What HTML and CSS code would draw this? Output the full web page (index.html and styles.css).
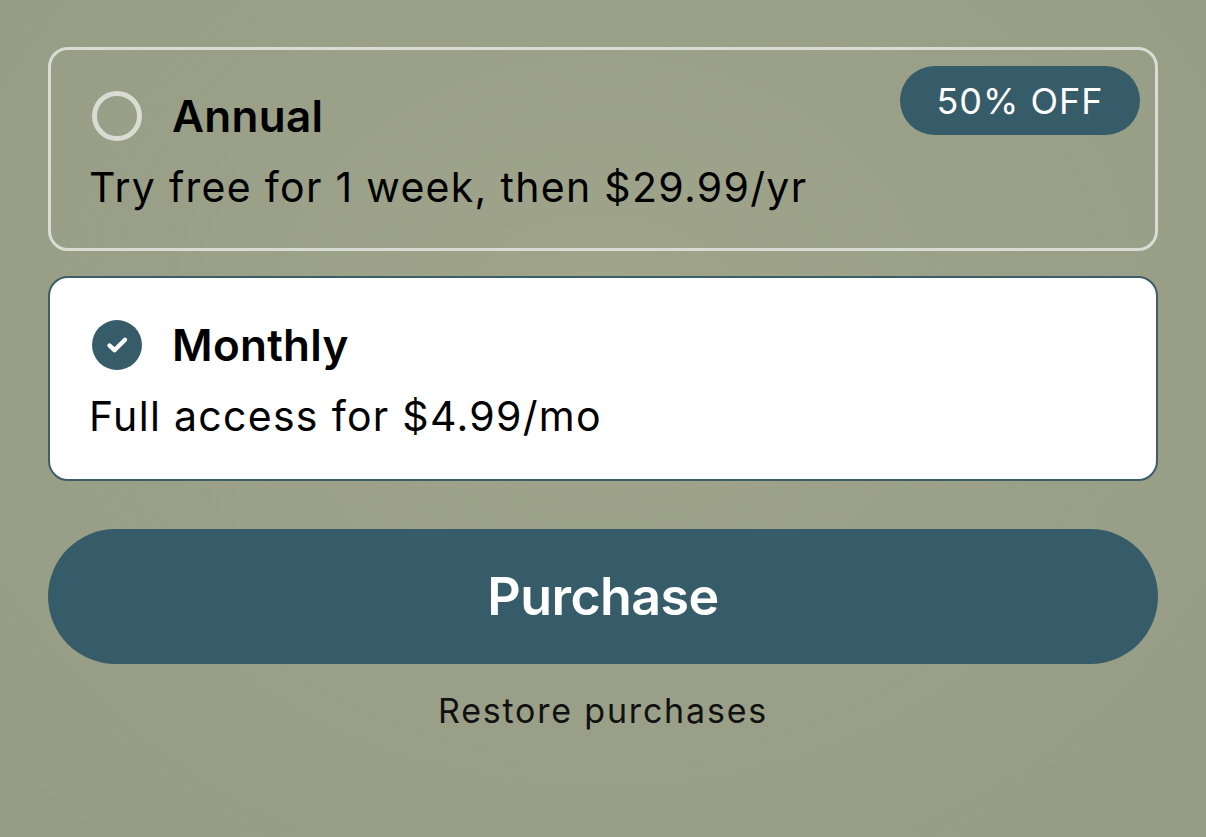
FILE: index.html
```html
<!DOCTYPE html>
<html>
<head>
<meta charset="utf-8">
<link rel="stylesheet" href="styles.css">
</head>
<body>
<main class="paywall">
  <div class="plan plan--idle">
    <div class="plan__head">
      <span class="radio"></span>
      <span class="plan__title">Annual</span>
    </div>
    <div class="plan__desc">Try free for 1 week, then $29.99/yr</div>
    <span class="badge">50% OFF</span>
  </div>
  <div class="plan plan--selected">
    <div class="plan__head">
      <span class="radio radio--checked">
        <svg viewBox="0 0 50 50" width="50" height="50">
          <circle cx="25" cy="25" r="25" fill="#365c6a"/>
          <path d="M17.5 25.5 L22.5 30.2 L33 19.8" fill="none" stroke="#fff" stroke-width="4.4" stroke-linecap="round" stroke-linejoin="round"/>
        </svg>
      </span>
      <span class="plan__title">Monthly</span>
    </div>
    <div class="plan__desc">Full access for $4.99/mo</div>
  </div>
  <button class="purchase">Purchase</button>
  <div class="restore">Restore purchases</div>
</main>
</body>
</html>
```

FILE: styles.css
```css
html, body {
  margin: 0;
  height: 100%;
}
body {
  background: radial-gradient(ellipse at 50% 40%, #9fa48b 0%, #9aa087 55%, #979d84 100%);
  font-family: Inter, "Noto Sans", "Liberation Sans", sans-serif;
  color: #000;
}
.paywall {
  display: flex;
  flex-direction: column;
  padding: 47px 48px 0 48px;
}
.plan {
  position: relative;
  box-sizing: border-box;
  height: 204px;
  border-radius: 20px;
  padding: 38px 40px 0 41px;
  display: flex;
  flex-direction: column;
}
.plan--idle {
  border: 3px solid #dadbd2;
}
.plan--selected {
  margin-top: 25px;
  height: 205px;
  background: #fff;
  border: 2px solid #3d5e69;
  padding-top: 39px;
  padding-left: 42px;
}
.plan__head {
  display: flex;
  align-items: center;
  height: 56px;
  gap: 30px;
}
.radio {
  box-sizing: border-box;
  width: 50px;
  height: 50px;
  border-radius: 50%;
  border: 5px solid #dadbd2;
  flex: none;
}
.radio--checked {
  border: 0;
}
.radio--checked svg {
  display: block;
}
.plan__title {
  font-size: 44px;
  font-weight: 600;
  letter-spacing: 0.3px;
}
.plan__desc {
  margin-top: 19px;
  font-size: 41px;
  line-height: 48px;
  font-weight: 400;
  letter-spacing: 1.3px;
  margin-left: -3px;
}
.badge {
  position: absolute;
  top: 16px;
  right: 15px;
  height: 69px;
  width: 240px;
  border-radius: 35px;
  background: #365c6a;
  color: #fff;
  font-size: 36px;
  letter-spacing: 1px;
  display: flex;
  align-items: center;
  justify-content: center;
}
.purchase {
  margin-top: 48px;
  height: 135px;
  border: 0;
  border-radius: 68px;
  background: #365c6a;
  color: #fff;
  font-family: inherit;
  font-size: 52px;
  font-weight: 600;
  letter-spacing: -0.6px;
  padding: 0;
}
.restore {
  margin-top: 26px;
  text-align: center;
  font-size: 34px;
  letter-spacing: 1.8px;
  color: #111;
}
```
